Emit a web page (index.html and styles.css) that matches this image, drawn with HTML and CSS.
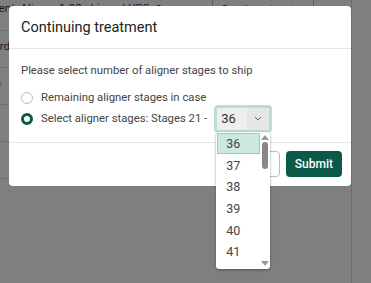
FILE: index.html
```html
<!DOCTYPE html>
<html lang="en">
<head>
    <meta charset="UTF-8">
    <title>Continuing treatment</title>
    <link rel="stylesheet" href="styles.css">
</head>
<body>

    <div class="page">
        <div class="page-top">
            <span class="shipment">Shipment: Aligner 1-20 shipped <a>UPS &#8599;</a></span>
            <span class="page-btn">Continue treatment</span>
        </div>
        <div class="page-row">
            <span class="cut-left">Record</span>
            <a class="cut-right">Assign shipment</a>
        </div>
        <div class="page-row">
            <span class="cut-left">Open</span>
        </div>
        <div class="page-row"></div>
        <div class="page-row"></div>
    </div>

    <div class="overlay"></div>

    <div class="modal">
        <div class="modal-header">Continuing treatment</div>
        <div class="modal-body">
            <p class="prompt">Please select number of aligner stages to ship</p>
            <label class="option">
                <span class="radio"></span>
                Remaining aligner stages in case
            </label>
            <label class="option">
                <span class="radio checked"></span>
                Select aligner stages: Stages 21 -
                <span class="select">
                    <span class="select-value">36</span>
                    <span class="select-arrow">
                        <svg width="8" height="5" viewBox="0 0 8 5"><path d="M1 1l3 3 3-3" fill="none" stroke="#666" stroke-width="1"/></svg>
                    </span>
                    <span class="dropdown">
                        <span class="dropdown-list">
                            <span class="item active">36</span>
                            <span class="item">37</span>
                            <span class="item">38</span>
                            <span class="item">39</span>
                            <span class="item">40</span>
                            <span class="item">41</span>
                        </span>
                        <span class="scrollbar">
                            <span class="arrow up"></span>
                            <span class="thumb"></span>
                            <span class="arrow down"></span>
                        </span>
                    </span>
                </span>
            </label>
        </div>
        <div class="modal-footer">
            <button class="btn-cancel">Cancel</button>
            <button class="btn-submit">Submit</button>
        </div>
    </div>

</body>
</html>
```

FILE: styles.css
```css
body {
    margin: 0;
    font-family: Roboto, "Liberation Sans", Arial, sans-serif;
    color: #333;
    background: #fff;
    width: 371px;
    height: 283px;
    overflow: hidden;
    position: relative;
}
.page {
    width: 351px;
    height: 283px;
    border-right: 1px solid #ddd;
    font-size: 11.5px;
    overflow: hidden;
}
.page-top {
    display: flex;
    align-items: flex-start;
    height: 30px;
    border-bottom: 1px solid #ddd;
}
.shipment {
    flex: none;
    margin-left: -34px;
    margin-top: 1px;
    width: 246px;
    overflow: hidden;
    white-space: nowrap;
}
.shipment a { color: #1a55b0; text-decoration: underline; }
.page-btn {
    flex: none;
    width: 84px;
    border: 1px solid #bbb;
    border-top: none;
    border-radius: 0 0 3px 3px;
    padding: 0 8px;
    height: 12px;
    line-height: 18px;
    overflow: hidden;
    white-space: nowrap;
}
.page-row {
    display: flex;
    justify-content: space-between;
    align-items: center;
    height: 36px;
    border-bottom: 1px solid #ddd;
}
.cut-left { margin-left: -26px; margin-top: -6px; }
.cut-right { color: #1a55b0; margin-right: -60px; margin-top: -6px; }
.overlay {
    position: absolute;
    inset: 0;
    background: rgba(0, 0, 0, 0.5);
}

.modal {
    position: absolute;
    left: 9px;
    top: 6px;
    width: 342px;
    background: #fff;
    border-radius: 4px;
}
.modal-header {
    height: 42px;
    line-height: 44px;
    padding: 0 12px;
    font-size: 14.5px;
    color: #222;
    border-bottom: 1px solid #e6e6e6;
}
.modal-body {
    padding: 14px 12px 13px;
    font-size: 11.3px;
    color: #444;
}
.prompt {
    margin: 0 0 8px;
    line-height: 16px;
}
.option {
    display: flex;
    align-items: center;
    gap: 8px;
    height: 21px;
}
.radio {
    width: 10px;
    height: 10px;
    border: 1px solid #bbb;
    border-radius: 50%;
    flex: none;
}
.radio.checked {
    width: 6px;
    height: 6px;
    border: 3px solid #0b5a48;
}
.select {
    position: relative;
    display: flex;
    margin-left: -1px;
    height: 22px;
    border: 3px solid #bcdcd4;
    border-radius: 4px;
    background: #eee;
}
.select-value {
    width: 26px;
    padding-left: 4px;
    line-height: 22px;
    font-size: 13px;
    color: #333;
}
.select-arrow {
    width: 22px;
    display: flex;
    align-items: center;
    justify-content: center;
    background: #e6e6e6;
}
.dropdown {
    position: absolute;
    top: 24px;
    left: -1px;
    width: 54px;
    height: 137px;
    display: flex;
    background: #fff;
    border-radius: 3px;
    box-shadow: 0 1px 3px rgba(0, 0, 0, 0.35);
    z-index: 2;
}
.dropdown-list {
    flex: 1;
    display: flex;
    flex-direction: column;
    padding-top: 1px;
}
.item {
    height: 21.7px;
    line-height: 21.7px;
    padding-left: 10px;
    font-size: 12.5px;
    color: #444;
}
.item.active {
    height: 19px;
    line-height: 19px;
    margin: 0 0 1px 1px;
    padding-left: 8px;
    background: #cde8e1;
    border: 1px solid #9dcbbf;
}
.scrollbar {
    width: 10px;
    display: flex;
    flex-direction: column;
    align-items: center;
    padding: 3px 0;
}
.arrow {
    width: 0;
    height: 0;
    border-left: 4px solid transparent;
    border-right: 4px solid transparent;
}
.arrow.up { border-bottom: 5px solid #999; }
.arrow.down { border-top: 5px solid #999; margin-top: auto; }
.thumb {
    width: 6px;
    height: 27px;
    margin-top: 2px;
    background: #888;
    border-radius: 3px;
}
.modal-footer {
    display: flex;
    justify-content: flex-end;
    gap: 6px;
    padding: 8px 9px 9px;
    border-top: 1px solid #e6e6e6;
}
.modal-footer button {
    height: 26px;
    border-radius: 4px;
    font-family: Roboto, "Liberation Sans", Arial, sans-serif;
    font-size: 12px;
    padding: 0 9px;
}
.btn-cancel {
    background: #fff;
    color: #1a55b0;
    border: 1px solid #bbb;
}
.btn-submit {
    background: #0b5a48;
    color: #fff;
    border: none;
    font-weight: 500;
}
```
